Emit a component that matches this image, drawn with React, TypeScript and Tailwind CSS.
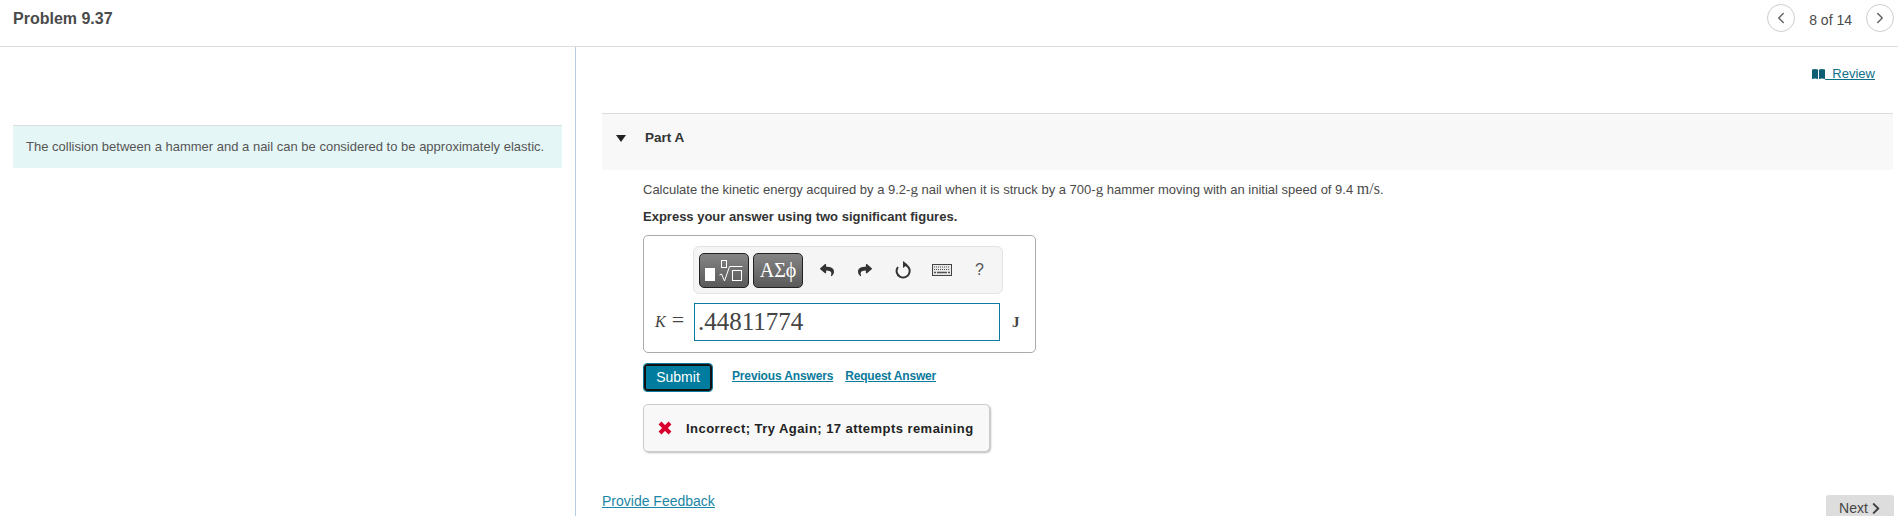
import React from "react";
import { ChevronLeft, ChevronRight } from "lucide-react";
import { FaChevronRight, FaReply, FaShare } from "react-icons/fa";

function RadicalIcon() {
  return (
    <svg width="38" height="22" viewBox="0 0 38 22" fill="none" stroke="#fff" strokeWidth="1">
      <rect x="0" y="8" width="10" height="13" fill="#fff" stroke="none" />
      <rect x="16.500" y="0.500" width="5" height="7" />
      <path d="M14.500 15l2 -1l3 7l5 -14.500h13" />
      <rect x="27.500" y="10.500" width="9" height="10" />
    </svg>
  );
}

function RefreshIcon() {
  return (
    <svg width="16" height="18" viewBox="0 0 16 18" fill="none">
      <path d="M8.500 3.500A6.500 6.500 0 1 1 3 6" stroke="#333" strokeWidth="2" />
      <path d="M8 0l4.500 3.500l-4.500 3.500z" fill="#333" />
    </svg>
  );
}

function KeyboardIcon() {
  return (
    <svg width="20" height="12" viewBox="0 0 20 12" fill="none">
      <rect x="0.500" y="0.500" width="19" height="11" fill="#e8e8e8" stroke="#444" />
      <path d="M2 3h16M2 5.500h16" stroke="#555" strokeWidth="1" strokeDasharray="1 1" />
      <path d="M2 8.500h2M5 8.500h10M16 8.500h2" stroke="#555" strokeWidth="1.500" />
    </svg>
  );
}

function BookIcon() {
  return (
    <svg width="13" height="10" viewBox="0 0 13 10" fill="#0e5f73">
      <path d="M0 0.500q3 -1 6 0v9.500q-3 -1 -6 0z" />
      <path d="M7 0.500q3 -1 6 0v9.500q-3 -1 -6 0z" />
    </svg>
  );
}

function MathEditor() {
  return (
    <div className="w-[393px] h-[118px] mt-[11px] border border-[#aaa] rounded-[5px] pt-[10px]">
      <div className="w-[310px] h-[48px] ml-[49px] bg-[#f5f5f5] border border-[#e3e3e3] rounded-[6px] flex items-center pl-[5px]">
        <div className="w-[50px] h-[35px] rounded-[5px] border border-[#222] bg-linear-to-b from-[#858585] to-[#5a5a5a] flex items-center justify-center pt-[2px]">
          <RadicalIcon />
        </div>
        <div className="w-[50px] h-[35px] ml-[4px] rounded-[5px] border border-[#222] bg-linear-to-b from-[#858585] to-[#5a5a5a] flex items-center justify-center text-white text-[20px] font-['Liberation_Serif',serif]">
          ΑΣϕ
        </div>
        <FaReply className="ml-[17px] text-[#333] w-[14px] h-[14px]" />
        <FaShare className="ml-[24px] text-[#333] w-[14px] h-[14px]" />
        <div className="ml-[23px]"><RefreshIcon /></div>
        <div className="ml-[21px]"><KeyboardIcon /></div>
        <span className="ml-[23px] text-[16px] text-[#555]">?</span>
      </div>
      <div className="flex items-center mt-[9px]">
        <span className="w-[50px] pl-[11px] text-[16px] text-[#444] font-['Liberation_Serif',serif] whitespace-nowrap">
          <i>K</i><span className="ml-[6px] text-[22px] leading-[16px]">=</span>
        </span>
        <div className="w-[306px] h-[38px] border border-[#0b7a9c] pl-[3px] flex items-center text-[25px] text-[#444] font-['Liberation_Serif',serif]">
          .44811774
        </div>
        <span className="ml-[12px] text-[15px] font-bold text-[#444] font-['Liberation_Serif',serif]">J</span>
      </div>
    </div>
  );
}

export default function App() {
  return (
    <div className="w-[1898px] h-[516px] overflow-hidden bg-white text-[#4a4a4a] font-['Liberation_Sans',Arial,sans-serif] flex flex-col">
      <header className="h-[47px] shrink-0 border-b border-[#ddd] flex items-center pl-[13px] pr-[4px]">
        <h1 className="text-[16px] font-bold -mt-[8px]">Problem 9.37</h1>
        <div className="ml-auto flex items-center -mt-[10px]">
          <button className="w-[28px] h-[28px] rounded-full border border-[#ccc] flex items-center justify-center">
            <ChevronLeft className="w-[18px] h-[18px] text-[#666]" />
          </button>
          <span className="mx-[14px] mt-[5px] text-[14px]">8 of 14</span>
          <button className="w-[28px] h-[28px] rounded-full border border-[#ccc] flex items-center justify-center">
            <ChevronRight className="w-[18px] h-[18px] text-[#666]" />
          </button>
        </div>
      </header>

      <div className="flex flex-1 min-h-0">
        <aside className="w-[576px] shrink-0 border-r border-[#b9cbe0] pl-[13px] pr-[13px] pt-[78px]">
          <div className="h-[43px] bg-[#e5f6f6] border-t border-[#ddd] pl-[13px] flex items-center text-[13px] text-[#555] whitespace-nowrap">
            The collision between a hammer and a nail can be considered to be approximately elastic.
          </div>
        </aside>

        <main className="flex-1 pl-[26px] pr-[4px] flex flex-col min-w-0">
          <div className="flex justify-end h-[66px] pr-[19px] pt-[19px]">
            <a className="flex items-center h-[16px] text-[#0e6f8a] text-[13px] underline">
              <BookIcon />
              <span className="whitespace-pre">{"  Review"}</span>
            </a>
          </div>
          <div className="h-[57px] mr-px bg-[#f8f8f8] border-t border-[#ddd] flex pl-[14px] pt-[16px] text-[#333]">
            <svg width="10" height="7" viewBox="0 0 10 7" className="mt-[5px]">
              <path d="M0 0h10L5 7z" fill="#222" />
            </svg>
            <span className="ml-[19px] text-[13.500px] font-bold leading-[16px]">Part A</span>
          </div>
          <div className="pl-[41px]">
            <p className="mt-[12px] text-[13px] leading-[14px] whitespace-nowrap">
              Calculate the kinetic energy acquired by a 9.2-<span className="font-['Liberation_Serif',serif] text-[15px]">g</span> nail when it is struck by a 700-<span className="font-['Liberation_Serif',serif] text-[15px]">g</span> hammer moving with an initial speed of 9.4 <span className="font-['Liberation_Serif',serif] text-[16px]">m/s</span>.
            </p>
            <p className="mt-[12px] text-[13px] font-bold leading-[15px] text-[#333]">Express your answer using two significant figures.</p>
            <MathEditor />
            <div className="flex items-center mt-[11px] h-[27px]">
              <button className="w-[68px] h-[27px] ml-px rounded-[3px] border-2 border-[#111] outline outline-[#0b7a9c] bg-[#007c9e] text-white text-[14px]">
                Submit
              </button>
              <a className="ml-[20px] text-[12px] font-bold tracking-[-0.15px] text-[#0b7a9c] underline -mt-[3px]">Previous Answers</a>
              <a className="ml-[12px] text-[12px] font-bold tracking-[-0.2px] text-[#0b7a9c] underline -mt-[3px]">Request Answer</a>
            </div>
            <div className="w-[347px] h-[48px] mt-[13px] bg-[#f8f8f8] border border-[#ccc] rounded-[5px] shadow-[1px_1px_2px_#bbb] flex items-center pl-[14px]">
              <svg width="14" height="14" viewBox="0 0 14 14">
                <path d="M2 2l10 10M12 2L2 12" stroke="#d9002b" strokeWidth="4" />
              </svg>
              <span className="ml-[14px] mt-[1px] text-[13px] font-bold text-[#222] tracking-[0.45px] whitespace-nowrap">Incorrect; Try Again; 17 attempts remaining</span>
            </div>
          </div>
          <div className="flex justify-between items-end flex-1">
            <a className="text-[14px] text-[#1a86a5] underline mb-[4px]">Provide Feedback</a>
            <button className="w-[68px] h-[21px] rounded-t-[3px] bg-[#ddd] text-[14px] leading-[16px] text-[#444] flex items-start justify-center gap-[3px] pt-[5px]">
              Next <FaChevronRight className="w-[10px] h-[13px] mt-[2px] text-[#444]" />
            </button>
          </div>
        </main>
      </div>
    </div>
  );
}
